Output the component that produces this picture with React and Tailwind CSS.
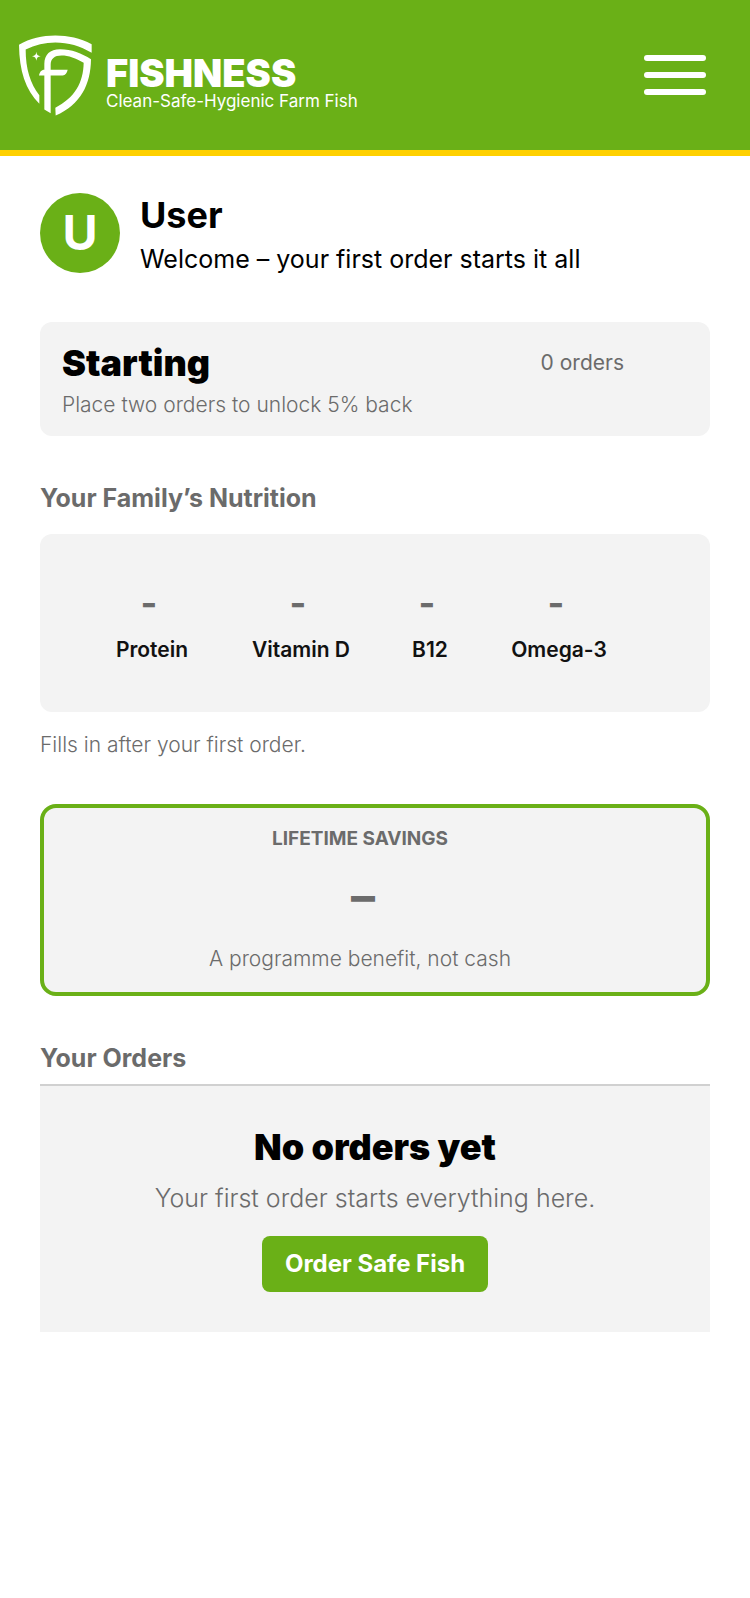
const nutrients = [
  { name: 'Protein', width: 'w-[72px]' },
  { name: 'Vitamin D', width: 'w-[98px]' },
  { name: 'B12', width: 'w-8' },
  { name: 'Omega-3', width: 'w-[98px]' },
]

function Logo() {
  return (
    <svg viewBox="57 44 219 242" className="h-[81px] w-[73px] shrink-0" fill="#fff" aria-hidden="true">
      <path d="M275 71C240 53 205 45 166 45C127 45 90 53 57 73C58 152 76 208 118 250L118 224C91 190 77 145 77 87C105 73 135 66 166 66C205 66 240 76 275 97Z" />
      <path d="M133 267V165H117C119 155 124 148 133 148V130C133 102 150 86 180 86C215 86 245 98 273 116C272 192 242 252 167 285L166 262C224 232 250 187 251 127C228 113 205 105 185 105C163 105 152 115 152 133V148H203C201 158 196 165 188 165H152V278Z" />
      <path d="M109 94C110 103 113 106 122 107C113 108 110 112 109 121C108 112 105 108 96 107C105 106 108 103 109 94Z" />
    </svg>
  )
}

export default function App() {
  return (
    <div className="min-h-screen bg-white font-['Inter','Open_Sans',sans-serif] text-black">
      <header className="flex h-[156px] items-start justify-between border-b-6 border-[#ffd000] bg-[#6ab017] pl-[19px] pr-11 text-white">
        <a href="/" className="mt-[35px] flex gap-[14px]">
          <Logo />
          <div className="pt-5">
            <div className="text-[38px] font-black leading-9">FISHNESS</div>
            <div className="text-[17px] leading-5">Clean-Safe-Hygienic Farm Fish</div>
          </div>
        </a>
        <button type="button" aria-label="Open menu" className="mt-[55px] flex w-[62px] flex-col gap-[11px]">
          <span className="h-1.5 w-full rounded-full bg-white" />
          <span className="h-1.5 w-full rounded-full bg-white" />
          <span className="h-1.5 w-full rounded-full bg-white" />
        </button>
      </header>

      <main className="px-10 pt-9">
        <section className="flex gap-5">
          <div className="mt-px flex size-20 shrink-0 items-center justify-center rounded-full bg-[#6ab017] text-5xl font-bold text-white">
            U
          </div>
          <div>
            <h1 className="text-4xl font-bold leading-[46px]">User</h1>
            <p className="text-[25px] leading-[42px]">Welcome – your first order starts it all</p>
          </div>
        </section>

        <section className="mt-[42px] flex h-[114px] justify-between rounded-xl bg-[#f3f3f3] pl-[22px] pr-[86px] pt-[17px]">
          <div>
            <h2 className="text-4xl font-black leading-[48px]">Starting</h2>
            <p className="text-[21px] font-light leading-9 text-[#6b6b6b]">Place two orders to unlock 5% back</p>
          </div>
          <p className="text-[21px] leading-[48px] text-[#6b6b6b]">0 orders</p>
        </section>

        <section className="mt-11">
          <h2 className="text-[25px] font-bold leading-9 text-[#6b6b6b]">Your Family’s Nutrition</h2>
          <div className="mt-[18px] flex h-[178px] gap-16 rounded-xl bg-[#f3f3f3] pl-[76px] pt-[51px]">
            {nutrients.map((item) => (
              <div key={item.name} className={`flex flex-col items-center whitespace-nowrap ${item.width}`}>
                <span className="pr-1.5 text-4xl font-bold leading-9 text-[#6b6b6b]">-</span>
                <span className="mt-[14px] text-[21px] font-semibold leading-[30px] text-[#111]">{item.name}</span>
              </div>
            ))}
          </div>
          <p className="mt-[18px] text-[21px] font-light leading-[30px] text-[#6b6b6b]">Fills in after your first order.</p>
        </section>

        <section className="mt-11 flex h-48 flex-col items-center rounded-2xl border-4 border-[#6ab017] bg-[#f3f3f3] pr-[30px] pt-4 text-[#6b6b6b]">
          <h2 className="text-[19px] font-bold leading-[30px]">LIFETIME SAVINGS</h2>
          <p className="mt-[18px] pl-1.5 text-5xl font-bold leading-[48px]">–</p>
          <p className="mt-6 text-[21px] font-light leading-[30px]">A programme benefit, not cash</p>
        </section>

        <section className="mt-11">
          <h2 className="text-[25px] font-bold leading-9 text-[#6b6b6b]">Your Orders</h2>
          <div className="mt-2 flex flex-col items-center border-t-2 border-[#d0d0d0] bg-[#f3f3f3] pb-10 pt-9">
            <h3 className="text-4xl font-black leading-[50px]">No orders yet</h3>
            <p className="mt-2 text-[25px] font-light leading-9 text-[#6b6b6b]">Your first order starts everything here.</p>
            <button type="button" className="mt-5 h-14 w-[226px] rounded-lg bg-[#6ab017] text-2xl font-bold text-white">
              Order Safe Fish
            </button>
          </div>
        </section>
      </main>
    </div>
  )
}
